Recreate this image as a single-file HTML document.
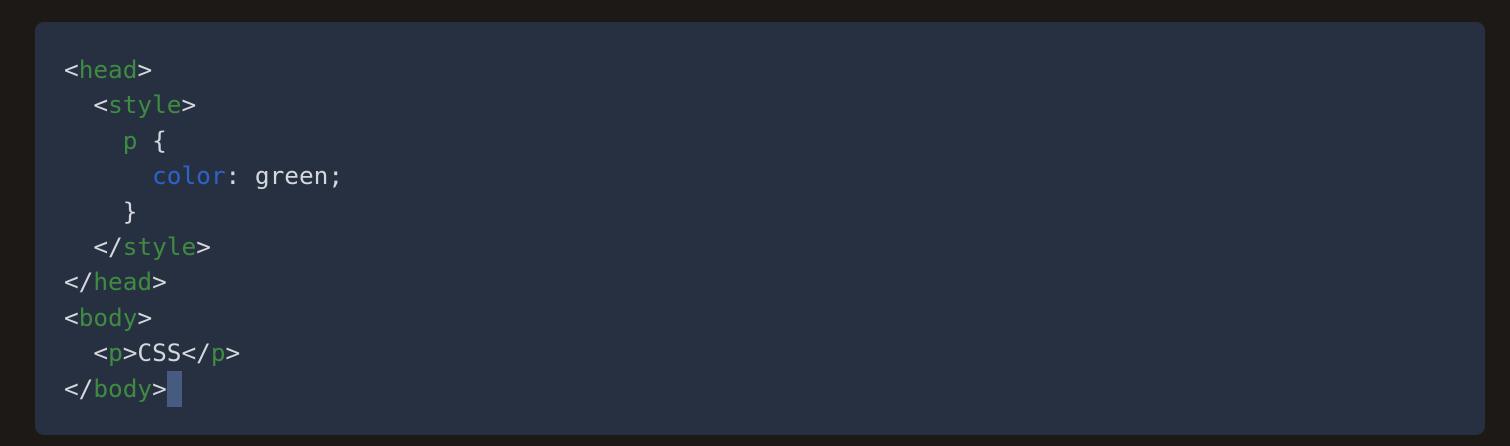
<!DOCTYPE html>
<html><head><style>
html,body{margin:0;padding:0;background:#1c1917;width:1510px;height:446px;overflow:hidden}
.panel{position:absolute;left:35px;top:22px;width:1450px;height:413px;background:#273040;border-radius:9px}
pre{position:absolute;left:64px;top:52px;margin:0;font-family:"DejaVu Sans Mono","Liberation Mono",monospace;font-size:24.4px;line-height:35.4px;color:#d4d8de}
.g{color:#3f8b42}.b{color:#2c63c9}
.cur{display:inline-block;width:15px;height:36px;background:#465b7f;vertical-align:top;margin-top:0}
</style></head><body>
<div class="panel"></div>
<pre>&lt;<span class="g">head</span>&gt;
  &lt;<span class="g">style</span>&gt;
    <span class="g">p</span> {
      <span class="b">color</span>: green;
    }
  &lt;/<span class="g">style</span>&gt;
&lt;/<span class="g">head</span>&gt;
&lt;<span class="g">body</span>&gt;
  &lt;<span class="g">p</span>&gt;CSS&lt;/<span class="g">p</span>&gt;
&lt;/<span class="g">body</span>&gt;<span class="cur"></span></pre>
</body></html>
